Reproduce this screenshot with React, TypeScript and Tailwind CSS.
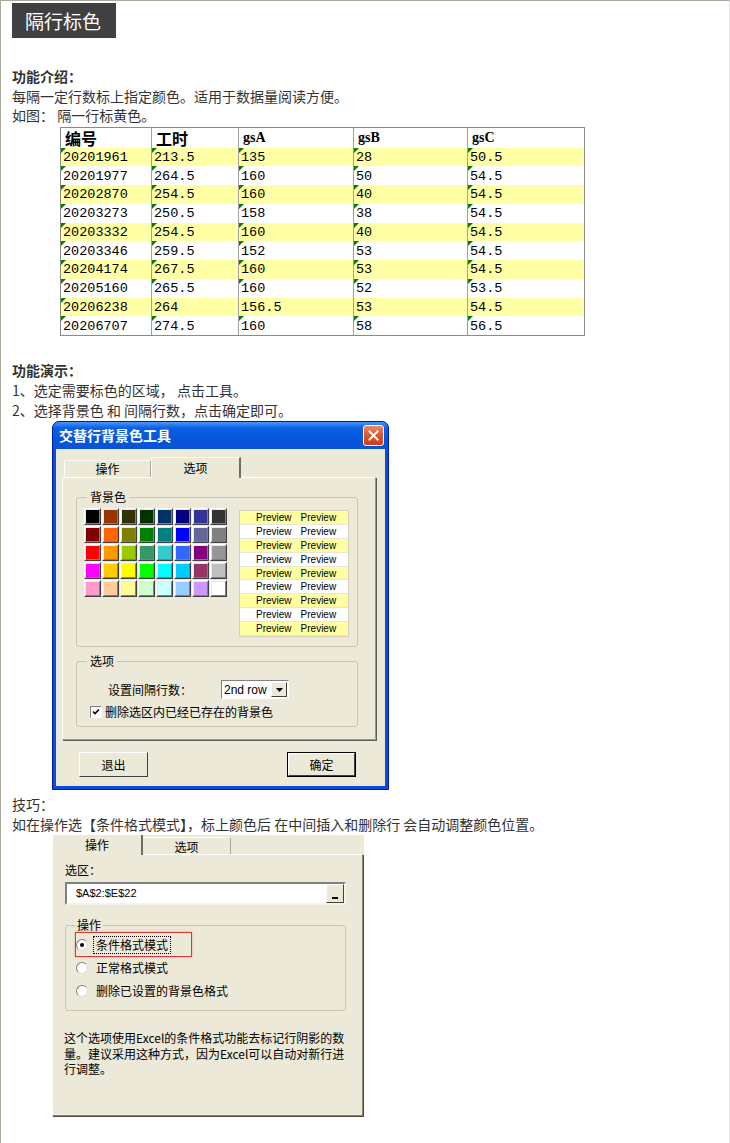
import React from "react";

const CJK = '"Noto Sans CJK SC", "Noto Sans", sans-serif';
const MONO = '"Liberation Mono", "Noto Sans CJK SC", monospace';
const SANS = '"Liberation Sans", "Noto Sans CJK SC", sans-serif';

const rows: string[][] = [
  ["20201961", "213.5", "135", "28", "50.5"],
  ["20201977", "264.5", "160", "50", "54.5"],
  ["20202870", "254.5", "160", "40", "54.5"],
  ["20203273", "250.5", "158", "38", "54.5"],
  ["20203332", "254.5", "160", "40", "54.5"],
  ["20203346", "259.5", "152", "53", "54.5"],
  ["20204174", "267.5", "160", "53", "54.5"],
  ["20205160", "265.5", "160", "52", "53.5"],
  ["20206238", "264", "156.5", "53", "54.5"],
  ["20206707", "274.5", "160", "58", "56.5"],
];
const colW = ["w-[90px]", "w-[87px]", "w-[115px]", "w-[114px]", "w-[117px]"];

const swatches: string[][] = [
  ["#000000", "#993300", "#333300", "#003300", "#003366", "#000080", "#333399", "#333333"],
  ["#800000", "#FF6600", "#808000", "#008000", "#008080", "#0000FF", "#666699", "#808080"],
  ["#FF0000", "#FF9900", "#99CC00", "#339966", "#33CCCC", "#3366FF", "#800080", "#969696"],
  ["#FF00FF", "#FFCC00", "#FFFF00", "#00FF00", "#00FFFF", "#00CCFF", "#993366", "#C0C0C0"],
  ["#FF99CC", "#FFCC99", "#FFFF99", "#CCFFCC", "#CCFFFF", "#99CCFF", "#CC99FF", "#FFFFFF"],
];

function Tri() {
  return (
    <span className="absolute left-0 top-0 w-0 h-0 border-t-[5px] border-t-[#0a7a0a] border-r-[5px] border-r-transparent" />
  );
}

function DataTable() {
  return (
    <div className="ml-[48px] mt-[1px] w-[525px] border border-[#8a8a8a] bg-white">
      <div className="flex h-[20px] items-center text-black">
        {["编号", "工时", "gsA", "gsB", "gsC"].map((h, i) => (
          <div
            key={h}
            className={`${colW[i]} h-full flex items-center pl-[4px] font-bold ${i > 0 ? "border-l border-[#a0a0a0]" : ""}`}
            style={{ fontFamily: i < 2 ? CJK : '"Liberation Serif", serif', fontSize: i < 2 ? 16 : 14 }}
          >
            {h}
          </div>
        ))}
      </div>
      {rows.map((r, ri) => (
        <div key={ri} className={`flex h-[18.75px] ${ri % 2 === 0 ? "bg-[#ffffa6]" : "bg-white"}`}>
          {r.map((c, ci) => (
            <div
              key={ci}
              className={`${colW[ci]} relative h-full flex items-center pl-[2px] text-[13.5px] text-black ${ci > 0 ? "border-l border-[#a0a0a0]" : ""}`}
              style={{ fontFamily: MONO }}
            >
              {(ri !== 8 || ci === 0) && <Tri />}
              <span className="pt-[2px]">{c}</span>
            </div>
          ))}
        </div>
      ))}
    </div>
  );
}

function Swatch({ c }: { c: string }) {
  return (
    <div className="w-[17px] h-[17px] border border-t-white border-l-white border-r-[#404040] border-b-[#404040]">
      <div
        className="w-full h-full border border-t-[#ece9d8] border-l-[#ece9d8] border-r-[#808080] border-b-[#808080]"
        style={{ backgroundColor: c }}
      />
    </div>
  );
}

function XPButton({ label, def }: { label: string; def?: boolean }) {
  return (
    <div className={`w-[69px] h-[25px] ${def ? "border border-black" : ""}`}>
      <div className="w-full h-full bg-[#ece9d8] border border-t-white border-l-white border-r-[#404040] border-b-[#404040] flex items-center justify-center text-[12px] text-black">
        {label}
      </div>
    </div>
  );
}

function Dialog() {
  return (
    <div className="ml-[40px] mt-[1px] w-[337px] h-[369px] rounded-t-[7px] border border-[#0019a0] bg-[#0a4ddc] flex flex-col">
      <div className="h-[27px] rounded-t-[6px] bg-[linear-gradient(180deg,#4b97f8_0%,#0b60e6_22%,#0554dc_70%,#0a52d4_100%)] flex items-center pl-[6px] pr-[4px]">
        <span className="text-white font-bold text-[14px] tracking-[0px]" style={{ fontFamily: CJK }}>
          交替行背景色工具
        </span>
        <div className="ml-auto w-[21px] h-[21px] rounded-[3px] border border-white bg-[linear-gradient(180deg,#e98a6c_0%,#d9562f_50%,#c9401c_100%)] flex items-center justify-center">
          <svg width="11" height="11" viewBox="0 0 11 11">
            <path d="M1.5 1.5 L9.5 9.5 M9.5 1.5 L1.5 9.5" stroke="white" strokeWidth="2" strokeLinecap="square" />
          </svg>
        </div>
      </div>
      <div className="mx-[3px] mb-[3px] flex-1 bg-[#ece9d8] pt-[8px] pl-[6px] pr-[9px]">
        <div className="flex items-end h-[20px] pl-[2px]">
          <div className="w-[87px] h-[17px] border-t border-l border-white border-r border-r-[#aca899] rounded-tl-[2px] flex items-center justify-center text-[12px] text-black">
            操作
          </div>
          <div className="relative z-10 -mb-[1px] w-[90px] h-[21px] bg-[#ece9d8] border-t border-l border-white border-r-2 border-r-[#716f64] rounded-tl-[2px] flex items-start justify-center pt-[1px] text-[12px] text-black">
            选项
          </div>
        </div>
        <div className="h-[263px] border-t border-l border-white border-r border-b border-r-[#9a978a] border-b-[#9a978a] shadow-[1px_1px_0_#5e5c52]">
          <fieldset className="ml-[13px] mt-[11px] w-[282px] h-[158px] border border-[#c8c5b4] rounded-[3px] pl-[7px]">
            <legend className="ml-[3px] px-[3px] text-[12px] leading-[16px] text-black">背景色</legend>
            <div className="flex mt-[3px]">
              <div className="flex flex-col gap-[1px]">
                {swatches.map((row, i) => (
                  <div key={i} className="flex gap-[1px]">
                    {row.map((c, j) => (
                      <Swatch key={j} c={c} />
                    ))}
                  </div>
                ))}
              </div>
              <div className="ml-[12px] mt-[2px] w-[110px] border border-[#d4d0bd]">
                {Array.from({ length: 9 }).map((_, i) => (
                  <div
                    key={i}
                    className={`h-[13.9px] flex items-center pl-[16px] gap-[9px] text-[10px] text-black border-b border-[#e8e6d8] ${i % 2 === 0 ? "bg-[#ffffa2]" : "bg-white"}`}
                    style={{ fontFamily: SANS }}
                  >
                    <span>Preview</span>
                    <span>Preview</span>
                  </div>
                ))}
              </div>
            </div>
          </fieldset>
          <fieldset className="ml-[13px] mt-[6px] w-[282px] h-[74px] border border-[#c8c5b4] rounded-[3px] pl-[13px]">
            <legend className="ml-[-3px] px-[3px] text-[12px] leading-[16px] text-black">选项</legend>
            <div className="flex items-center h-[19px] mt-[11px] text-[12px] text-black">
              <span className="w-[131px] pl-[18px]">设置间隔行数：</span>
              <div className="w-[68px] h-[19px] bg-white border border-t-[#808080] border-l-[#808080] border-r-white border-b-white flex items-center">
                <span className="flex-1 pl-[2px] text-[12px] text-black leading-none" style={{ fontFamily: SANS }}>
                  2nd row
                </span>
                <div className="w-[16px] h-[15px] mr-[1px] bg-[#ece9d8] border border-t-white border-l-white border-r-[#404040] border-b-[#404040] flex items-center justify-center">
                  <svg width="7" height="4" viewBox="0 0 7 4">
                    <path d="M0 0 H7 L3.5 4 Z" fill="black" />
                  </svg>
                </div>
              </div>
            </div>
            <div className="flex items-center mt-[6px] h-[13px] text-[12px] text-black">
              <div className="w-[12px] h-[12px] bg-white border border-t-[#808080] border-l-[#808080] border-r-white border-b-white flex items-center justify-center">
                <svg width="8" height="8" viewBox="0 0 8 8">
                  <path d="M1 3.5 L3 5.5 L7 1.5" stroke="black" strokeWidth="1.6" fill="none" />
                </svg>
              </div>
              <span className="ml-[3px]">删除选区内已经已存在的背景色</span>
            </div>
          </fieldset>
        </div>
        <div className="flex mt-[12px] pl-[17px]">
          <XPButton label="退出" />
          <div className="ml-[139px]">
            <XPButton label="确定" def />
          </div>
        </div>
      </div>
    </div>
  );
}

function Radio({ on }: { on?: boolean }) {
  return (
    <div className="w-[12px] h-[12px] rounded-full bg-white border border-t-[#808080] border-l-[#808080] border-r-[#e0ddd0] border-b-[#e0ddd0] flex items-center justify-center">
      {on && <div className="w-[4px] h-[4px] rounded-full bg-black" />}
    </div>
  );
}

function SecondShot() {
  return (
    <div className="ml-[40px] mt-[1px] w-[312px] h-[281px] bg-[#ece9d8] flex flex-col text-black">
      <div className="flex items-end h-[19px]">
        <div className="relative z-10 -mb-[1px] w-[91px] h-[20px] bg-[#ece9d8] border-l border-white border-r-2 border-r-[#716f64] flex items-start justify-center pt-[1px] text-[12px]">
          操作
        </div>
        <div className="w-[88px] h-[17px] border-t border-white border-r border-r-[#aca899] rounded-tr-[2px] flex items-center justify-center text-[12px] pt-[2px]">
          选项
        </div>
      </div>
      <div className="flex-1 w-[311px] border-t border-l border-white border-r border-b border-r-[#8a877a] border-b-[#8a877a] shadow-[1px_1px_0_#4a4840] pl-[12px]">
        <div className="mt-[7px] text-[12px] leading-[16px]">选区：</div>
        <div className="mt-[4px] w-[281px] h-[23px] bg-white border-2 border-t-[#808080] border-l-[#808080] border-r-[#f4f2ea] border-b-[#f4f2ea] flex items-center">
          <span className="pl-[9px] text-[11px] text-black" style={{ fontFamily: SANS }}>
            $A$2:$E$22
          </span>
          <div className="ml-auto w-[18px] h-[19px] bg-[#ece9d8] border border-t-white border-l-white border-r-[#404040] border-b-[#404040] flex items-end justify-center pb-[3px]">
            <div className="w-[6px] h-[2px] bg-black" />
          </div>
        </div>
        <fieldset className="mt-[12px] w-[281px] h-[94px] border border-[#c8c5b4] rounded-[3px] pl-[10px]">
          <legend className="ml-[-1px] px-[2px] text-[12px] leading-[16px]">操作</legend>
          <div className="relative flex items-center h-[23px] text-[12px]">
            <div className="absolute -left-[1px] top-[-1px] w-[117px] h-[25px] border border-[#d03a3a] shadow-[0_0_2px_rgba(220,80,80,0.5)]" />
            <Radio on />
            <span className="ml-[5px] px-[2px] h-[18px] flex items-center border border-dotted border-black">条件格式模式</span>
          </div>
          <div className="flex items-center h-[23px] text-[12px]">
            <Radio />
            <span className="ml-[8px]">正常格式模式</span>
          </div>
          <div className="flex items-center h-[23px] text-[12px]">
            <Radio />
            <span className="ml-[8px]">删除已设置的背景色格式</span>
          </div>
        </fieldset>
        <div className="mt-[19px] -ml-[1px] text-[12px] leading-[15.5px] text-black">
          这个选项使用Excel的条件格式功能去标记行阴影的数
          <br />
          量。建议采用这种方式，因为Excel可以自动对新行进
          <br />
          行调整。
        </div>
      </div>
    </div>
  );
}

export default function App() {
  return (
    <div
      className="w-[730px] h-[1143px] bg-white border-t border-l border-[#a8a89a] border-r border-r-[#e6e6e6] overflow-hidden"
      style={{ fontFamily: CJK }}
    >
      <div className="pl-[11px]">
        <div className="mt-[2px] w-[104px] h-[35px] bg-[#404040] text-white text-[19px] leading-[35px] pl-[13px]">
          隔行标色
        </div>
        <div className="mt-[29px] text-[14px] leading-[19.5px] text-[#333]">
          <div className="font-bold">功能介绍：</div>
          <div>每隔一定行数标上指定颜色。适用于数据量阅读方便。</div>
          <div>如图： 隔一行标黄色。</div>
        </div>
        <DataTable />
        <div className="mt-[24px] text-[14px] leading-[20px] text-[#333]">
          <div className="font-bold">功能演示：</div>
          <div>1、选定需要标色的区域， 点击工具。</div>
          <div>2、选择背景色 和 间隔行数，点击确定即可。</div>
        </div>
        <Dialog />
        <div className="mt-[4px] text-[14px] leading-[20px] text-[#333]">
          <div>技巧：</div>
          <div>如在操作选【条件格式模式】，标上颜色后 在中间插入和删除行 会自动调整颜色位置。</div>
        </div>
        <SecondShot />
      </div>
    </div>
  );
}
